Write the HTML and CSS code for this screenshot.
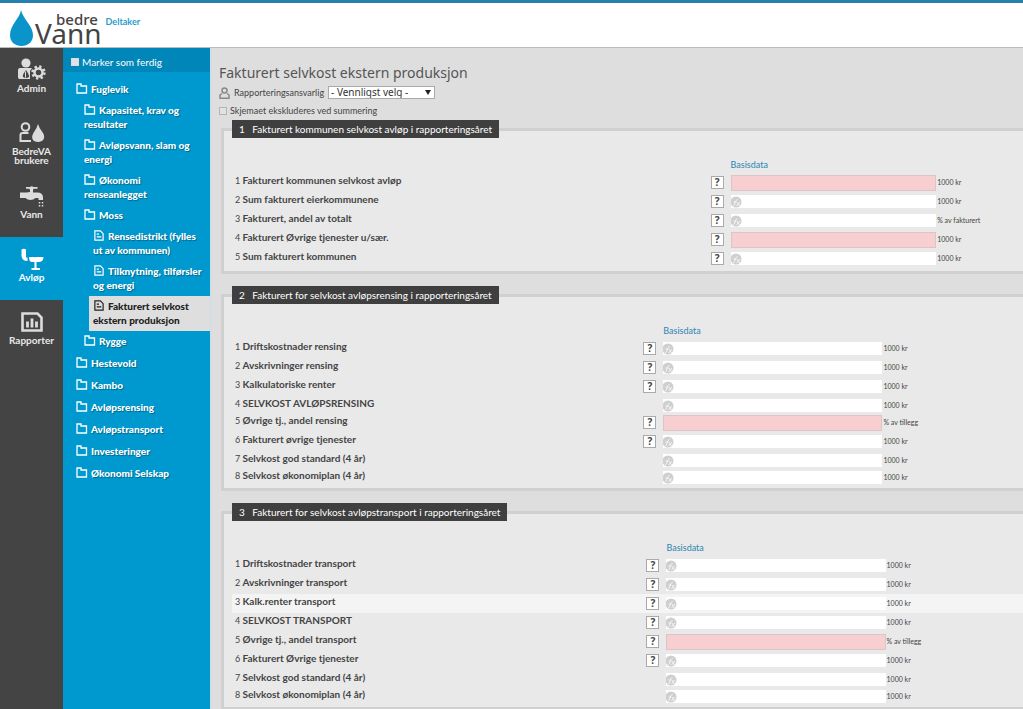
FILE: index.html
```html
<!DOCTYPE html>
<html lang="nb">
<head>
<meta charset="utf-8">
<title>bedreVann – Fakturert selvkost ekstern produksjon</title>
<link rel="stylesheet" href="styles.css">
</head>
<body>
<svg class="defs" aria-hidden="true">
  <symbol id="folder" viewBox="0 0 12 11"><path d="M1 1h4v2h5.500v7H1z" fill="none" stroke="currentColor" stroke-width="1.300"/></symbol>
  <symbol id="doc" viewBox="0 0 11 12"><path d="M1 1h6l3 3v7H1z" fill="none" stroke="currentColor" stroke-width="1.300"/><path d="M3 4.500h2.500M3 7.500h5" stroke="currentColor" stroke-width="1.200"/></symbol>
  <symbol id="fx" viewBox="0 0 11 12"><circle cx="5" cy="6" r="5.500" fill="#cfcfcf"/><path d="M2 10q1.500 0 2-3t2.500-3.500M2.500 6h3M6 6l2.500 4M9 6l-3.500 4" fill="none" stroke="#f4f4f4" stroke-width="1"/></symbol>
</svg>
<header class="header">
  <a class="logo" href="#">
    <svg class="drop" viewBox="0 0 23 36" aria-hidden="true"><path d="M11 0C10 8 0 15 0 25c0 7 5 11 11.500 11S23 32 23 25C23 16 13 9 11 0z" fill="#0a94c9"/></svg>
    <span class="wordmark"><span class="bedre">bedre</span><span class="vann">Vann</span></span>
  </a>
  <span class="role">Deltaker</span>
</header>
<div class="layout">
  <nav class="modules" aria-label="Moduler">
    <a class="module" href="#">
      <svg viewBox="0 0 30 24" aria-hidden="true"><circle cx="9" cy="5" r="4.600"/><path d="M1 12q0-2 2-2h12l-2 3v8H2.500q-1.500 0-1.500-2z"/><path d="M9 12q-4 5-3 7 3 2 6 0 .500-2-3-7z" fill="#444"/><path d="M8.500 13.500v6" stroke="#dcdcdc"/><circle cx="21.500" cy="14.500" r="4" fill="#444" stroke="#dcdcdc" stroke-width="2.500"/><circle cx="21.500" cy="14.500" r="6" fill="none" stroke="#dcdcdc" stroke-width="2.400" stroke-dasharray="2.300 2.412"/></svg>
      <span>Admin</span>
    </a>
    <a class="module" href="#">
      <svg viewBox="0 0 30 24" aria-hidden="true"><circle cx="8.500" cy="6" r="3.800" fill="none" stroke="#dcdcdc" stroke-width="2"/><path d="M14 20H3.500v-6q0-2 2-2h6" fill="none" stroke="#dcdcdc" stroke-width="2"/><path d="M21 3q-1 4-4 8c-4 6-1 10 4 10s8-4 5-9q-4-5-5-9z"/></svg>
      <span>BedreVA brukere</span>
    </a>
    <a class="module" href="#">
      <svg viewBox="0 0 30 24" aria-hidden="true"><path d="M9 3h4q1.500-1.500 3.500 0h4v1.800h-4l-.500 1.700v2h4q6 0 6 5v2.500h-4.500v-2h-3q-2 2-5 2t-5-2H3V8.500h6.500l3.500-.500V6.500l-.500-1.700H9z"/><path d="M22.500 18v5M25.500 18v5" stroke="#dcdcdc" stroke-width="1.500" stroke-dasharray="1.500 1.500"/></svg>
      <span>Vann</span>
    </a>
    <a class="module current" href="#" aria-current="page">
      <svg viewBox="0 0 30 24" aria-hidden="true"><path d="M4.500 2.500q2.500-1.500 4.500 0v8h1.500v3.500Q5 14 4.500 9zM12 10h14.500q0 5-5 5H15q-3 0-3-5z"/><path d="M18.500 15v7M14.500 22h8.500" stroke="#fff" stroke-width="2"/></svg>
      <span>Avløp</span>
    </a>
    <a class="module" href="#">
      <svg viewBox="0 0 30 24" aria-hidden="true"><path d="M5.500 3.500h15l4 4v13h-19z" fill="none" stroke="#dcdcdc" stroke-width="2.600"/><path d="M10.500 17.500v-6M15 17.500v-9M19.500 17.500v-6" stroke="#dcdcdc" stroke-width="2.800"/></svg>
      <span>Rapporter</span>
    </a>
  </nav>
  <aside class="side">
    <label class="done"><input class="tick done-tick" type="checkbox">Marker som ferdig</label>
    <ul class="tree">
      <li><a class="node" href="#"><svg class="ico"><use href="#folder"/></svg>Fuglevik</a>
        <ul class="branch">
          <li><a class="node" href="#"><svg class="ico"><use href="#folder"/></svg>Kapasitet, krav og resultater</a></li>
          <li><a class="node" href="#"><svg class="ico"><use href="#folder"/></svg>Avløpsvann, slam og energi</a></li>
          <li><a class="node" href="#"><svg class="ico"><use href="#folder"/></svg>Økonomi<br>renseanlegget</a></li>
          <li><a class="node" href="#"><svg class="ico"><use href="#folder"/></svg>Moss</a>
            <ul class="leaves">
              <li><a class="node" href="#"><svg class="ico"><use href="#doc"/></svg>Rensedistrikt (fylles ut av kommunen)</a></li>
              <li><a class="node" href="#"><svg class="ico"><use href="#doc"/></svg>Tilknytning, tilførsler og energi</a></li>
              <li><a class="node selected" href="#" aria-current="page"><svg class="ico"><use href="#doc"/></svg>Fakturert selvkost ekstern produksjon</a></li>
            </ul>
          </li>
          <li><a class="node" href="#"><svg class="ico"><use href="#folder"/></svg>Rygge</a></li>
        </ul>
      </li>
      <li><a class="node" href="#"><svg class="ico"><use href="#folder"/></svg>Hestevold</a></li>
      <li><a class="node" href="#"><svg class="ico"><use href="#folder"/></svg>Kambo</a></li>
      <li><a class="node" href="#"><svg class="ico"><use href="#folder"/></svg>Avløpsrensing</a></li>
      <li><a class="node" href="#"><svg class="ico"><use href="#folder"/></svg>Avløpstransport</a></li>
      <li><a class="node" href="#"><svg class="ico"><use href="#folder"/></svg>Investeringer</a></li>
      <li><a class="node" href="#"><svg class="ico"><use href="#folder"/></svg>Økonomi Selskap</a></li>
    </ul>
  </aside>
  <main class="main">
    <h1 class="title">Fakturert selvkost ekstern produksjon</h1>
    <div class="owner">
      <svg class="person" viewBox="0 0 11 12" aria-hidden="true"><circle cx="5.500" cy="3.500" r="2.500"/><path d="M3 6.500 1 8v3.300h9V8L8 6.500"/></svg>
      <label for="owner">Rapporteringsansvarlig</label>
      <span class="picker">
        <select class="select" id="owner"><option>- Vennligst velg -</option></select>
        <svg class="caret" viewBox="0 0 6 5" aria-hidden="true"><path d="M0 0h6L3 5z"/></svg>
      </span>
    </div>
    <label class="exclude"><input class="tick" type="checkbox">Skjemaet ekskluderes ved summering</label>
    <form id="form"></form>
  </main>
</div>
<script src="form.js"></script>
</body>
</html>
```

FILE: styles.css
```css
* { box-sizing: border-box; }
body { margin: 0; min-height: 100vh; display: flex; flex-direction: column; font-family: Lato, "Noto Sans", sans-serif; font-size: 10px; line-height: 14px; color: #444; background: #dedede; }
a { color: inherit; text-decoration: none; }
ul { list-style: none; margin: 0; padding: 0; }
.defs { display: none; }

.header { display: flex; align-items: flex-start; height: 48px; padding: 7px 10px; gap: 4px; background: #fff; border-top: 3px solid #2780ab; border-bottom: 1px solid #bbb; }
.logo { display: flex; gap: 2px; color: #444; font-family: "Noto Sans", sans-serif; }
.drop { width: 23px; height: 36px; }
.wordmark { display: flex; flex-direction: column; }
.bedre { padding-left: 21px; font-size: 15px; font-weight: 500; line-height: 18px; }
.vann { font-size: 28px; line-height: 10px; }
.role { padding-top: 5px; font-size: 9px; font-weight: 700; color: #2b9bcb; }

.layout { flex: 1; display: flex; align-items: stretch; }
.modules { flex: none; width: 63px; background: #444; }
.module { display: flex; flex-direction: column; align-items: center; height: 63px; padding: 10px 6px 0; gap: 2px; font-weight: 700; line-height: 9px; text-align: center; color: #e8e8e8; }
.module svg { flex: none; width: 30px; height: 24px; fill: #dcdcdc; }
.module.current { color: #fff; background: #0099cf; }
.module.current svg { fill: #fff; }

.side { flex: none; width: 147px; color: #fff; background: #0099cf; }
.done { display: flex; align-items: center; gap: 3px; height: 24px; padding: 4px 8px 0; background: #0086b9; }
.tick { appearance: none; width: 8px; height: 8px; margin: 0; border: 1px solid #b5b5b5; background: #e2e2e2; }
.done-tick { border-color: #ddd; }
.tree { padding-top: 6px; }
.node { display: block; padding: 4px 0 4px 13px; font-weight: 900; text-shadow: 1px 1px 1px #00000055; }
.branch .node { padding: 3px 4px 4px 21px; }
.branch .leaves .node { margin-left: 26px; padding: 3px 4px 4px 4px; }
.branch .leaves .selected { color: #222; background: #dedede; text-shadow: none; }
.ico { width: 12px; height: 11px; margin-right: 3px; vertical-align: -1px; }

.main { flex: 1; min-width: 0; padding: 15px 0 20px 7px; border-left: 2px solid #d5dde4; }
.title { margin: 0; font-family: "Noto Sans", sans-serif; font-size: 14px; font-weight: 400; line-height: 20px; color: #555; }
.owner { display: flex; align-items: center; gap: 4px; height: 19px; font-size: 9px; }
.person { width: 11px; height: 12px; fill: none; stroke: #888; stroke-width: 1.5; }
.picker { position: relative; display: flex; }
.select { appearance: none; width: 107px; height: 13px; padding: 0 0 0 2px; border: 1px solid #aaa; background: #fff; color: #333; font: 10px/11px "Noto Sans", sans-serif; }
.caret { position: absolute; right: 4px; top: 4px; width: 6px; height: 5px; fill: #222; pointer-events: none; }
.exclude { display: flex; align-items: center; gap: 3px; height: 18px; font-size: 9px; }

.group { min-width: 0; margin: 0 0 12px 2px; padding: 0 0 3px 8px; border: 3px solid #d0d0d0; border-right: 0; background: #e9e9e9; }
.legend { padding: 0 7px; line-height: 18px; color: #fff; background: #3f3f3f; }
.legend span { margin-right: 5px; }
.table { width: 100%; margin-top: 20px; border-collapse: collapse; table-layout: fixed; }
.table th, .table td { padding: 0; vertical-align: top; text-align: left; }
.label-wide { width: 60.5%; }
.value-narrow { width: 26%; }
.label-mid { width: 52%; }
.label-late { width: 52.4%; }
.value-mid { width: 27.7%; }
.help-col { width: 20px; }
.table .basis { height: 15px; font-size: 9px; font-weight: 400; color: #2b86b3; }
.row { height: 17px; }
.row.helped { height: 19px; }
.row.hover { background: #f4f4f4; }
.table .name { padding-left: 3px; font-size: 9px; }
.name label { font-size: 10px; font-weight: 700; }
.help { display: block; width: 13px; height: 13px; margin-top: 3px; padding: 0; border: 1px solid #aaa; background: #fff; color: #444; font: 700 10px/11px "Noto Sans", sans-serif; }
.field { position: relative; padding-top: 3px; }
.field svg { position: absolute; left: 0; top: 4px; width: 11px; height: 12px; }
.input { display: block; width: 100%; height: 13px; padding: 0 0 0 13px; border: 0; background: #fff; font: 9px Lato, sans-serif; }
.field.required { padding-top: 2px; }
.required .input { height: 16px; border: 1px solid #dfc4c6; background: #f8cfd1; }
.table .unit { padding: 5px 0 0 1px; font-size: 7px; line-height: 9px; }
```

FILE: form.js
```js
const groups = [
  { title: 'Fakturert kommunen selvkost avløp i rapporteringsåret', cols: ['label-wide', 'value-narrow'], rows: [
    { name: 'Fakturert kommunen selvkost avløp', help: true, required: true },
    { name: 'Sum fakturert eierkommunene', help: true },
    { name: 'Fakturert, andel av totalt', help: true, unit: '% av fakturert' },
    { name: 'Fakturert Øvrige tjenester u/sær.', help: true, required: true },
    { name: 'Sum fakturert kommunen', help: true }
  ] },
  { title: 'Fakturert for selvkost avløpsrensing i rapporteringsåret', cols: ['label-mid', 'value-mid'], rows: [
    { name: 'Driftskostnader rensing', help: true },
    { name: 'Avskrivninger rensing', help: true },
    { name: 'Kalkulatoriske renter', help: true },
    { name: 'SELVKOST AVLØPSRENSING' },
    { name: 'Øvrige tj., andel rensing', help: true, required: true, unit: '% av tillegg' },
    { name: 'Fakturert øvrige tjenester', help: true },
    { name: 'Selvkost god standard (4 år)' },
    { name: 'Selvkost økonomiplan (4 år)' }
  ] },
  { title: 'Fakturert for selvkost avløpstransport i rapporteringsåret', cols: ['label-late', 'value-mid'], rows: [
    { name: 'Driftskostnader transport', help: true },
    { name: 'Avskrivninger transport', help: true },
    { name: 'Kalk.renter transport', help: true, hover: true },
    { name: 'SELVKOST TRANSPORT', help: true },
    { name: 'Øvrige tj., andel transport', help: true, required: true, unit: '% av tillegg' },
    { name: 'Fakturert Øvrige tjenester', help: true },
    { name: 'Selvkost god standard (4 år)' },
    { name: 'Selvkost økonomiplan (4 år)' }
  ] }
];

const rowHtml = (row, g, i) => {
  const id = `f${g}-${i}`;
  return `<tr class="row${row.help ? ' helped' : ''}${row.hover ? ' hover' : ''}">
    <td class="name">${i + 1} <label for="${id}">${row.name}</label></td>
    <td>${row.help ? '<button class="help" type="button">?</button>' : ''}</td>
    <td><div class="field${row.required ? ' required' : ''}"><input class="input" id="${id}" type="text">${row.required ? '' : '<svg aria-hidden="true"><use href="#fx"/></svg>'}</div></td>
    <td class="unit">${row.unit || '1000 kr'}</td>
  </tr>`;
};

document.getElementById('form').innerHTML = groups.map((group, g) => `
  <fieldset class="group">
    <legend class="legend"><span>${g + 1}</span> ${group.title}</legend>
    <table class="table">
      <colgroup><col class="${group.cols[0]}"><col class="help-col"><col class="${group.cols[1]}"><col></colgroup>
      <thead><tr><td></td><td></td><th class="basis">Basisdata</th><td></td></tr></thead>
      <tbody>${group.rows.map((row, i) => rowHtml(row, g, i)).join('')}</tbody>
    </table>
  </fieldset>`).join('');
```
